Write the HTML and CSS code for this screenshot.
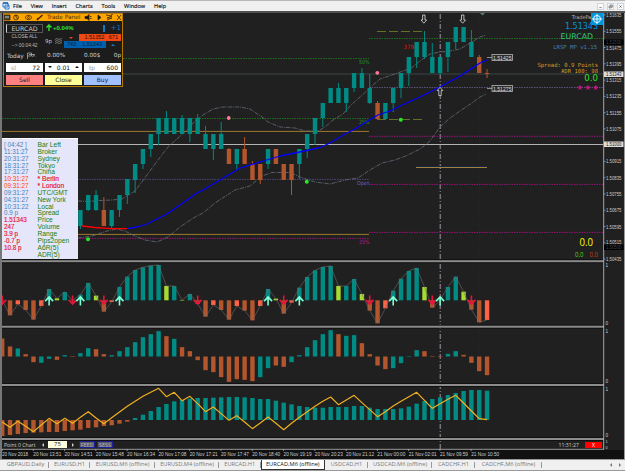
FILE: index.html
```html
<!DOCTYPE html>
<html lang="en">
  <head>
    <title>EURCAD,M6 (offline)</title>
    <meta charset="utf-8" />
    <link rel="stylesheet" href="styles.css">
  </head>
  <body>
    <header class="menu-bar">
      <svg class="app-icon" viewBox="0 0 8 8">
        <path d="M1 1h5v4H1z M3 3h4v4H3z" fill="#fff" stroke="#2478c8" />
        <path d="M1 1h5" stroke="#1464b4" stroke-width="1.5" />
      </svg>
      <nav class="menu">
        <span>File</span>
        <span>View</span>
        <span>Insert</span>
        <span>Charts</span>
        <span>Tools</span>
        <span>Window</span>
        <span>Help</span>
      </nav>
      <div class="window-buttons">
        <svg viewBox="0 0 7 7"><path d="M2 5h3" /></svg>
        <svg viewBox="0 0 7 7"><path d="M3 2.5v-1h3v3h-1M1.5 3h3v2.5h-3z" /></svg>
        <svg viewBox="0 0 7 7"><path d="M2 2l3 3M5 2l-3 3" /></svg>
      </div>
    </header>

    <main class="workspace">
      <svg id="chart" class="chart" viewBox="0 13 625 446"></svg>

      <section class="trade-panel">
        <div class="panel-title">
          <svg class="panel-icons" viewBox="0 0 40 7">
            <path d="M0 1h6v5H0z" fill="#444" />
            <path d="M1 3h4" stroke="#ddd" />
            <circle cx="12" cy="3.5" r="2.4" />
            <path d="M12 1v2.5l2 1" />
            <path d="M21 3.5q3.5-4.5 7 0q-3.5 4.5-7 0z" />
            <circle cx="24.5" cy="3.5" r="1" />
            <path d="M33 6l5.5-5M33 6l1-2" stroke-width="1.3" />
          </svg>
          <span>Trade Panel</span>
          <svg class="panel-icons-right" viewBox="0 0 38 7">
            <path d="M1 2.5h2l2-2v6l-2-2H1z" fill="#111" />
            <path d="M6 2.5h1.5M6 4.5h1.5" />
            <path d="M14 1l3 2.5-3 2.5z" fill="#111" />
            <path d="M22 1l6 1-5 2 5 0-5 2M27 1l2-1" />
            <path d="M33 1l4 5M37 1l-4 5" />
          </svg>
        </div>
        <div class="row row-symbol">
          <span class="symbol">EURCAD</span>
          <span class="change">
            <svg viewBox="0 0 6 7"><path d="M3 7V1M.5 3.5L3 1l2.5 2.5" /></svg>+0.04%
          </span>
          <span class="step"><i></i>+1</span>
        </div>
        <div class="row row-quotes">
          <div class="closing">
            <span>CLOSE ALL</span>
            <span>--&gt; 00:04:42</span>
          </div>
          <span class="spread">9p</span>
          <svg class="waves" viewBox="0 0 7 6">
            <path d="M0 1.5l2-1 2 1 3-1M0 3.5l2-1 2 1 3-1M0 5.5l2-1 2 1 3-1" />
          </svg>
          <div class="quotes">
            <div class="quote ask"><b class="down"></b><span>1.51352</span><span>671</span></div>
            <div class="quote bid"><span>743</span><span>1.51343</span><b class="up"></b></div>
          </div>
        </div>
        <div class="row row-today">
          <span class="today">Today
            <svg viewBox="0 0 9 7"><path d="M.5 7V1h4v3h-4M2 2.5h6M5 4.5q3-2 3 0" /></svg>
          </span>
          <span>0.00%</span>
          <span>0.00$</span>
          <span>0p</span>
        </div>
        <div class="row row-inputs">
          <div class="field"><em>sl</em><span>72</span></div>
          <div class="field"><b class="down"></b><span>0.01</span><b class="up"></b></div>
          <div class="field"><em>tp</em><span>600</span></div>
        </div>
        <div class="row row-buttons">
          <button class="sell">Sell</button>
          <button class="close">Close</button>
          <button class="buy">Buy</button>
        </div>
      </section>

      <section class="clocks">
        <ul class="values">
          <li>[ 04:42 ]</li>
          <li>11:31:27</li>
          <li>20:31:27</li>
          <li>18:31:27</li>
          <li>17:31:27</li>
          <li class="open">10:31:27</li>
          <li class="open">09:31:27</li>
          <li>09:31:27</li>
          <li>04:31:27</li>
          <li>10:31:22</li>
          <li>0.9 p</li>
          <li class="alert">1.51343</li>
          <li class="alert">247</li>
          <li class="alert">3.9 p</li>
          <li class="alert">-0.7 p</li>
          <li class="alert">10.8 p</li>
        </ul>
        <ul class="names">
          <li>Bar Left</li>
          <li>Broker</li>
          <li>Sydney</li>
          <li>Tokyo</li>
          <li>China</li>
          <li class="alert">* Berlin</li>
          <li class="alert">* London</li>
          <li>UTC/GMT</li>
          <li>New York</li>
          <li>Local</li>
          <li>Spread</li>
          <li>Price</li>
          <li>Volume</li>
          <li>Range</li>
          <li>Pips2open</li>
          <li>A6R(5)</li>
          <li>ADR(5)</li>
        </ul>
      </section>

      <section class="info">
        <div class="info-name">TradePanel</div>
        <div class="info-price">1.51343</div>
        <div class="info-symbol">EURCAD</div>
        <div class="info-version">LRSP MP v1.15</div>
        <div class="info-spread">Spread: 0.9 Points</div>
        <div class="info-adr">ADR 100: 98</div>
        <div class="info-pips">0.0</div>
        <svg class="info-stars" viewBox="0 0 22 7">
          <path id="star" d="M3 .4l.7 2h2.1L4.1 3.8l.7 2.3L3 4.8 1.2 6.1l.7-2.3L.2 2.4h2.1z" />
          <use href="#star" x="7.9" />
          <use href="#star" x="15.8" />
        </svg>
      </section>
      <svg class="target" viewBox="0 0 13 13">
        <circle cx="6.5" cy="6.5" r="3.8" />
        <path d="M6.5 1v11M1 6.5h11" />
      </svg>

      <div class="toolbar">
        <span class="toolbar-name">Point 0 Chart</span>
        <b class="left"></b>
        <span class="toolbar-value">75</span>
        <b class="right"></b>
        <span class="toggle">FEED</span>
        <span class="toggle">SESS</span>
        <span class="toolbar-time">11:31:27</span>
        <span class="toolbar-close">X</span>
      </div>
    </main>

    <footer class="tabs">
      <span style="width: 47px">GBPAUD,Daily</span>
      <span style="width: 41px">EURUSD,H1</span>
      <span style="width: 65px">EURUSD,M6 (offline)</span>
      <span style="width: 64px">EURUSD,M4 (offline)</span>
      <span style="width: 41.5px">EURCAD,H1</span>
      <span class="active" style="width: 64.5px">EURCAD,M6 (offline)</span>
      <span style="width: 43px">USDCAD,H1</span>
      <span style="width: 64px">USDCAD,M6 (offline)</span>
      <span style="width: 43px">CADCHF,H1</span>
      <span style="width: 67px">CADCHF,M6 (offline)</span>
      <div class="tabs-scroll"><b class="left"></b><b class="right"></b></div>
    </footer>
    <script src="chart.js"></script>
  </body>
</html>
```

FILE: styles.css
```css
* {
	box-sizing: border-box;
}

body {
	margin: 0;
	width: 625px;
	height: 471px;
	overflow: hidden;
	display: flex;
	flex-direction: column;
	background: #202020;
	font-family: "Open Sans", "Noto Sans", sans-serif;
	font-size: 6px;
	color: #ccc;
}

ul {
	list-style: none;
	margin: 0;
	padding: 0;
}

/* Menu bar */

.menu-bar {
	flex: none;
	display: flex;
	align-items: center;
	height: 13px;
	padding-left: 2px;
	background: #f0f0f0;
	border-top: 1px solid #b8b8b8;
	border-bottom: 2px solid #505252;
	color: #111;
}

.app-icon {
	width: 8px;
	height: 8px;
}

.menu {
	display: flex;
	gap: 8.8px;
	padding-left: 3px;
	font-size: 5.6px;
	line-height: 10px;
	-webkit-text-stroke: 0.15px #111;
}

.window-buttons {
	display: flex;
	gap: 3px;
	margin-left: auto;
	padding-right: 1px;
}

.window-buttons svg {
	width: 7px;
	height: 7px;
	background: #fbfbfb;
	border: 0.5px solid #ccd6df;
	fill: none;
	stroke: #555;
}

/* Chart */

.workspace {
	position: relative;
	flex: none;
	height: 446px;
}

.chart {
	display: block;
	width: 625px;
	height: 446px;
}

.axis {
	font: 5.6px "Liberation Sans", sans-serif;
}

.scale {
	font: 4.4px "Liberation Sans", sans-serif;
}

.level {
	font: 5.8px "DejaVu Sans", sans-serif;
}

.small {
	font: 7px "Open Sans", sans-serif;
}

.total {
	font: 10px "Open Sans", sans-serif;
}

/* Arrows */

.up,
.down,
.left,
.right {
	flex: none;
	width: 0;
	height: 0;
	border: 2px solid transparent;
}

.up {
	border-bottom-color: currentColor;
	border-top: 0;
}

.down {
	border-top-color: currentColor;
	border-bottom: 0;
}

.left {
	border-right-color: currentColor;
	border-left: 0;
}

.right {
	border-left-color: currentColor;
	border-right: 0;
}

/* Trade panel */

.trade-panel {
	position: absolute;
	left: 3px;
	top: 0;
	width: 120px;
	height: 74px;
	border: 1px solid #b87800;
	background: #1c1c1c;
	font-family: "DejaVu Sans", sans-serif;
}

.panel-title {
	display: flex;
	align-items: center;
	height: 7px;
	background: #ffa500;
	color: #4a3000;
	line-height: 7px;
	white-space: nowrap;
}

.panel-title span {
	width: 35px;
	margin-left: 3px;
	font-size: 5.8px;
}

.panel-icons,
.panel-icons-right {
	flex: none;
	width: 40px;
	height: 7px;
	fill: none;
	stroke: #332200;
	stroke-width: 0.8;
}

.panel-icons-right {
	width: 38px;
	margin-left: auto;
}

.row {
	display: flex;
	align-items: center;
	padding: 0 1px 0 2px;
}

.row-symbol {
	height: 13px;
	padding-top: 1px;
}

.symbol {
	width: 37px;
	height: 9px;
	border: 1px solid #555;
	border-left-color: #ccc;
	font-size: 6.3px;
	line-height: 7px;
	text-align: center;
}

.change {
	padding-left: 3px;
	color: #2ee62e;
	font: bold 6px/9px "Liberation Sans", sans-serif;
}

.change svg {
	width: 6px;
	height: 7px;
	margin-right: 1px;
	fill: none;
	stroke: currentColor;
	stroke-width: 1.4;
	vertical-align: -1px;
}

.step {
	display: flex;
	align-items: center;
	gap: 6px;
	margin-left: auto;
	color: #1478c8;
	font-size: 7px;
}

.step i {
	width: 2px;
	height: 7px;
	background: #1478c8;
}

.row-quotes {
	height: 14px;
}

.closing {
	display: flex;
	flex-direction: column;
	width: 37px;
	align-items: center;
	font: 4.8px/9px "Liberation Sans", sans-serif;
	color: #bbb;
}

.spread {
	width: 12px;
	padding-left: 2px;
	font-size: 5.4px;
	white-space: nowrap;
}

.waves {
	width: 7px;
	height: 6px;
	fill: none;
	stroke: #aaa;
	stroke-width: 0.6;
}

.quotes {
	display: flex;
	flex-direction: column;
	width: 54px;
	margin-left: auto;
	font: 5.5px/7px "Liberation Sans", sans-serif;
	color: #331000;
}

.quote {
	display: flex;
	align-items: center;
	justify-content: space-between;
	height: 7px;
	padding: 0 3px;
}

.ask {
	width: 42px;
	margin-left: 12px;
	background: #f04814;
}

.ask .down {
	width: 0;
	margin-left: -13px;
	margin-right: 7px;
	color: #f04814;
}

.bid {
	width: 42px;
	margin-left: -3px;
	background: #0060b0;
	color: #001c38;
}

.bid .up {
	margin-left: 3px;
	margin-right: -12px;
	color: #1478c8;
}

.row-today {
	height: 14px;
	font-size: 5.7px;
}

.row-today span:nth-child(2) {
	width: 37px;
	margin-left: 4px;
}

.row-today span:last-child {
	margin-left: auto;
}

.today {
	width: 37px;
	padding-left: 1px;
	font-size: 5.8px;
	white-space: nowrap;
}

.today svg {
	width: 9px;
	height: 7px;
	margin-left: 1px;
	fill: none;
	stroke: #bbb;
	stroke-width: 0.7;
	vertical-align: -1px;
}

.row-inputs {
	height: 10px;
	gap: 2px;
}

.field {
	display: flex;
	flex: 1;
	align-items: center;
	justify-content: space-between;
	height: 9px;
	padding: 0 3px;
	background: #fff;
	color: #111;
	line-height: 9px;
}

.field em {
	padding-left: 2px;
	color: #999;
	font-style: normal;
}

.row-buttons {
	gap: 2px;
	margin-top: 3px;
}

.row-buttons button {
	flex: 1;
	height: 10px;
	padding: 0;
	border: 0;
	color: #222;
	font: 6px/10px "DejaVu Sans", sans-serif;
}

.row-buttons .sell {
	background: #ff8080;
}

.row-buttons .close {
	background: #ffff98;
}

.row-buttons .buy {
	background: #a0c0ff;
}

/* Clocks */

.clocks {
	position: absolute;
	left: 2px;
	top: 125px;
	display: grid;
	grid-template-columns: 33.5px 1fr;
	width: 76px;
	height: 121px;
	padding: 3px 0 0 2px;
	background: #e6e6fa;
	border-top: 1px solid #fff;
	font: 6.7px/6.85px "Liberation Sans", sans-serif;
	white-space: nowrap;
}

.values {
	color: #4682b4;
	font-size: 6.3px;
}

.values .open {
	color: #ff4500;
}

.names {
	color: #148014;
}

.clocks .alert {
	color: #e61432;
	-webkit-text-stroke: 0.15px #e61432;
}

/* Info */

.info {
	position: absolute;
	top: 0;
	right: 26px;
	width: 90px;
	height: 80px;
	display: flex;
	flex-direction: column;
	align-items: flex-end;
	font-family: "DejaVu Sans", sans-serif;
	white-space: nowrap;
}

.info-name {
	font: 5px/9px "DejaVu Sans", sans-serif;
	color: #bbb;
}

.info-price {
	margin-right: 1px;
	color: #0094dc;
	font-size: 8px;
	line-height: 9px;
}

.info-symbol {
	margin-right: 6px;
	color: #32c878;
	font-size: 7.8px;
	line-height: 12px;
}

.info-version {
	margin-right: 2px;
	color: #4682b4;
	font: 5.6px/8px "DejaVu Sans Mono", monospace;
}

.info-spread,
.info-adr {
	margin-right: 1px;
	color: #d69a24;
	font: 5.6px/6px "DejaVu Sans Mono", monospace;
}

.info-spread {
	margin-top: 11px;
}

.info-pips {
	margin-right: 1px;
	color: #28e628;
	font-size: 8.6px;
	line-height: 9px;
}

.info-stars {
	width: 22px;
	height: 7px;
	margin-top: 1px;
	fill: #d01488;
}

.target {
	position: absolute;
	left: 591px;
	top: 0;
	width: 12px;
	height: 12px;
	background: #0096dc;
	fill: none;
	stroke: #fff;
	stroke-width: 1;
}

/* Toolbar */

.toolbar {
	position: absolute;
	left: 3px;
	top: 427px;
	display: flex;
	align-items: center;
	width: 600px;
	height: 9px;
	padding: 0 1px;
	white-space: nowrap;
}

.toolbar-name {
	width: 38px;
	font-size: 5.2px;
}

.toolbar-value {
	width: 19px;
	margin: 0 5px 0 4px;
	background: #ffffe0;
	color: #222;
	line-height: 7px;
	text-align: center;
}

.toggle {
	width: 16px;
	height: 7px;
	margin-left: 2px;
	border: 0.5px solid #1e1e96;
	background: #5a5a64;
	color: #aab4c8;
	font-size: 5.4px;
	line-height: 6px;
	text-align: center;
}

.toolbar .right {
	margin-right: 3px;
}

.toolbar-time {
	margin-left: auto;
	margin-right: 6px;
	font-size: 5.2px;
}

.toolbar-close {
	width: 17px;
	height: 6px;
	background: #f00;
	color: #fff;
	font-size: 5px;
	line-height: 6px;
	text-align: center;
}

/* Tabs */

.tabs {
	display: flex;
	flex: none;
	height: 12px;
	padding-left: 2px;
	background: #f0f0f0;
	border-top: 1px solid #999;
	border-bottom: 1px solid #999;
	color: #777;
	font-size: 5.7px;
	line-height: 9px;
	white-space: nowrap;
}

.tabs span {
	position: relative;
	text-align: center;
}

.tabs span:after {
	content: "";
	position: absolute;
	right: 0;
	top: 2px;
	height: 6px;
	border-right: 1px solid #999;
}

.tabs .active {
	background: #fff;
	border: 1px solid #333;
	border-top: 0;
	color: #111;
}

.tabs .active:after {
	display: none;
}

.tabs-scroll {
	display: flex;
	gap: 7px;
	margin-left: auto;
	padding: 3px 4px 0 0;
}
```

FILE: chart.js
```js
'use strict'

const svg = document.getElementById('chart')
const TEAL = '#008b84'
const BROWN = '#b4562d'
const colors = { t: TEAL, b: BROWN, y: '#a6dc32', r: '#ff6347' }

function barX(i) {
  return 2.2 + i * 7.82
}

function add(tag, attrs, text) {
  const el = document.createElementNS('http://www.w3.org/2000/svg', tag)
  Object.keys(attrs).forEach((key) => el.setAttribute(key, attrs[key]))
  if (text) {
    el.textContent = text
  }
  svg.appendChild(el)
}

function rect(x, y, width, height, fill) {
  add('rect', { x, y, width, height, fill })
}

function line(x1, y1, x2, y2, stroke, width, dash) {
  add('line', {
    x1, y1, x2, y2, stroke,
    'stroke-width': width || 1,
    'stroke-dasharray': dash || 'none'
  })
}

function path(points, stroke, width, dash) {
  add('polyline', {
    points, stroke, fill: 'none',
    'stroke-width': width,
    'stroke-dasharray': dash || 'none',
    'stroke-linejoin': 'round'
  })
}

function label(x, y, text, width, fill, cls) {
  add('text', { x, y, fill, textLength: width, lengthAdjust: 'spacingAndGlyphs', class: cls || 'axis' }, text)
}

// ------------------------ FRAME ------------------------
rect(0, 13, 625, 446, '#202020')
rect(2, 450, 622, 9, '#111')

// session and period markers
line(479.5, 14, 479.5, 449, '#24204e', 1, '1 2')
line(440.3, 14, 440.3, 449, '#786e7c', 1.5, '5 2 1 2')

// ------------------------ LEVELS ------------------------
line(2, 74, 603, 74, '#333838', 1.4)
line(123, 58.5, 369, 58.5, '#1e6e1e', 1, '1.5 1')
line(2, 118.5, 369, 118.5, '#1e6e1e', 1, '1.5 1')
line(369, 38.5, 603, 38.5, '#1e6e1e', 1, '1.5 1')
line(369, 87.5, 603, 87.5, '#5a5078', 1, '1.5 1')
line(2, 179.4, 369, 179.4, '#504678', 1, '1.5 1')
line(2, 131.4, 369, 131.4, '#a0782d', 1)
line(2, 234.4, 369, 234.4, '#a0782d', 1)
line(2, 238.4, 369, 238.4, '#961478', 1, '1.5 1')
;[136.3, 184.4, 232.4].forEach((y) => line(369, y, 603, y, '#961478', 1, '1.5 1'))
line(377, 31.5, 422, 31.5, '#6e7828', 0.9, '9 3')
line(377, 119.5, 422, 119.5, '#6e7828', 0.9, '9 3')
line(416, 166.7, 487, 166.7, '#142850', 1)
line(416, 167.5, 487, 167.5, '#a0823c', 1)
line(2, 144.5, 603, 144.5, '#b4b4b4', 1.2)

label(359, 64, '50%', 10.5, '#239123', 'level')
label(359, 124, '25%', 10.5, '#239123', 'level')
label(357, 184.5, 'Open', 12.5, '#6a5cc0', 'level')
label(359, 244, '25%', 10.5, '#b8148a', 'level')
label(403.5, 48.5, '379', 10.5, '#dc1414', 'level')

// ------------------------ BANDS ------------------------
path('78,201 88,201.5 100,200.5 112,200 122,199 135,191 147,175 158,160 168,147 178,138 187,130 195,121 203,115 213,109 223,107 240,107 250,109 262,117 268,122 280,127 295,128 305,131 318,131 325,127 333,120 343,114 350,106 360,97 372,86 380,79 392,75 403,71 410,69 420,61 430,54 440,52 450,51 460,49 470,43 480,37 486,35', '#66707c', 0.8, '4 1 1 1')
path('78,238 92,236 107,231 117,229 125,231 135,236 145,240 157,242 168,237 180,227 195,217 203,213 215,203 235,190 250,186 262,176 272,172.5 290,172.5 300,177 315,182 330,184 345,180 358,178 370,170 382,163 395,160 408,155 420,149 430,141 440,127 450,118 460,111 472,103 480,97 486,94', '#66707c', 0.8, '4 1 1 1')

// ------------------------ CANDLES ------------------------
// [color, body top, body bottom, high, low], first candle is bar 10
const candles = [
  ['t', 210, 226, 210, 229], ['t', 195, 210, 195, 211], ['t', 195, 210, 190, 211],
  ['b', 210, 226, 197, 226], ['t', 210, 226, 210, 229], ['t', 195, 210, 195, 217],
  ['t', 179, 195, 179, 204], ['t', 164, 180, 164, 193], ['t', 149, 164, 149, 169],
  ['t', 134, 149, 134, 157], ['t', 118, 134, 118, 145], ['t', 118, 134, 111, 134],
  ['t', 118, 134, 118, 134], ['t', 118, 134, 115, 134], ['t', 118, 134, 118, 142],
  ['t', 118, 134, 114, 134], ['t', 134, 149, 126, 149], ['t', 134, 149, 134, 160],
  ['t', 134, 149, 122, 149], ['b', 149, 164, 148, 164], ['t', 149, 164, 149, 170],
  ['b', 149, 164, 137, 164], ['b', 164, 180, 161, 180], ['b', 164, 180, 164, 184],
  ['t', 149, 164, 149, 169], ['b', 149, 164, 149, 164], ['b', 164, 180, 164, 180],
  ['b', 164, 180, 164, 195], ['t', 149, 164, 149, 179], ['t', 134, 149, 134, 158],
  ['t', 118, 134, 118, 145], ['t', 103, 118, 103, 127], ['t', 88, 103, 88, 103],
  ['t', 88, 103, 83, 103], ['t', 88, 103, 88, 112], ['t', 73, 88, 73, 92],
  ['t', 73, 88, 68, 88], ['t', 88, 103, 74, 104], ['b', 103, 119, 101, 120],
  ['t', 103, 119, 103, 119], ['t', 88, 103, 88, 112], ['t', 73, 88, 73, 98],
  ['t', 57, 73, 57, 86], ['t', 42, 57, 42, 68], ['t', 42, 57, 31, 59],
  ['t', 57, 73, 43, 73], ['t', 57, 73, 57, 75], ['t', 42, 57, 42, 72],
  ['t', 27, 42, 27, 49], ['t', 27, 42, 27, 42], ['t', 42, 57, 30, 57],
  ['b', 57, 73, 55, 73], ['b', 73, 74, 69, 78]
]
candles.forEach(([color, top, bottom, high, low], n) => {
  const x = barX(n + 10)
  rect(x - 0.5, high, 1, low - high, colors[color])
  rect(x - 2.2, top, 4.4, bottom - top, colors[color])
})

path('82,226 95,227.5 111,228.7 127,228.7', '#ff0000', 1.3)
path('127,228.7 137,227 147,224 157,219 167,214 177,207 187,200 197,193 203,190 220,180 240,168 260,162 280,156 300,152 320,147.5 330,143 345,134 355,129 370,119.5 378,115 390,111 400,106 420,97 440,87 460,76 480,63 487,60', '#0000ff', 1.3)

// swing points
;[[228.7, 118], [377.3, 72.8]].forEach(([cx, cy]) => add('circle', { cx, cy, r: 1.9, fill: '#ff7896' }))
;[[88, 239.3], [306.8, 181.7], [400.8, 119.7]].forEach(([cx, cy]) => add('circle', { cx, cy, r: 2, fill: '#28e628' }))

function hollowArrow(x, y, dir) {
  const d = `M${x - 1.2} ${y - 4 * dir}h2.4v${5 * dir}h1.6l-2.8 ${3.2 * dir}l-2.8 ${-3.2 * dir}h1.6z`
  add('path', { d, fill: '#202020', stroke: '#ddd', 'stroke-width': 0.8 })
}
hollowArrow(423.8, 19, 1)
hollowArrow(462.7, 19, 1)
hollowArrow(440, 91.5, -1)
add('path', { d: 'M480 13h5l-2.5 2.5z', fill: '#5a7878' })

// price tags
;[[57.5, '1.51425'], [88.5, '1.51275']].forEach(([y, text]) => {
  line(487, y, 492, y, '#aaa', 0.8)
  add('rect', { x: 492, y: y - 3, width: 20.5, height: 6, fill: '#2c2c2c', stroke: '#b4b4b4', 'stroke-width': 0.8 })
  label(493, y + 2, text, 18.5, '#ddd')
})

label(579.5, 246.3, '0.0', 13.5, '#ffff00', 'total')
label(575, 256.8, '0.0', 8.5, '#5ad214', 'small')
label(589.5, 256.8, '0.0', 8.5, '#c83c14', 'small')

// ------------------------ INDICATORS ------------------------
// a bar is its color letter and its height in thirds of a pixel, negative is below zero
function histogram(base, bars) {
  return bars.split(' ').map((bar, i) => {
    const value = Number(bar.slice(1)) / 3
    const x = barX(i)
    const left = Math.max(x - 2.2, 2)
    rect(left, value > 0 ? base - value : base, x + 2.2 - left, Math.max(Math.abs(value), 0.5), colors[bar[0]])
    return x + ',' + (base - value)
  }).join(' ')
}

const momentum = histogram(300.3, 't0 b-45 r-12 b-29 b-58 r-17 t34 y6 t25 b-1 t17 t52 y14 b-34 r-5 t40 t71 t91 t99 t104 t106 y43 t43 y1 t19 b-11 b-49 r-14 b-29 b-58 r-17 b-31 b-60 r-17 t34 y5 b-40 r-7 t38 t70 t90 t100 t103 y43 t43 t64 y19 b-31 b-69 r-24 t29 t65 t88 t97 y40 b-22 t0 t40 t71 y26 b-28 b-66 r-59')
path(momentum, '#6c6c6c', 0.6)

histogram(356.5, 'b54 b30 t24 b7 b-17 t-19 t-7 b-10 t4 b1 t10 t25 b22 b7 t4 t16 t28 t43 t58 t67 t76 b61 t53 b28 b16 b-11 b-41 b-47 b-62 b-76 b-68 b-70 b-74 t-62 t-35 b-27 b-31 t-17 t4 t28 t49 t67 t79 b67 t62 t64 b40 b7 b-27 b-38 t-35 t-20 t1 t19 b16 b1 b1 t8 t16 b5 b-19 b-44 b-56')

histogram(420, 'b-48 b-45 b-42 b-39 b-38 b-37 b-36 b-36 b-33 b-31 b-29 b-24 b-22 b-18 b-16 b-11 b-5 t6 t16 t27 t39 t48 t56 t60 t64 t66 t66 t67 t68 t69 t69 t68 t66 t63 t63 t58 t52 t47 t42 t39 t37 t37 t39 t39 t39 t42 t42 t37 t33 t33 t33 t35 t40 t49 t57 t63 t68 t75 t81 t87 t90 t90 t88')

const signal = [
  501, 517, 499, 514, 530, 510, 490, 506, 490, 505, 487, 470, 489, 506, 488, 471,
  454, 439, 424, 412, 400, 425, 412, 437, 424, 446, 470, 456, 476, 496, 482, 501,
  521, 504, 486, 505, 524, 505, 487, 470, 454, 439, 426, 449, 435, 421, 443, 464,
  485, 470, 453, 439, 425, 412, 436, 460, 446, 433, 421, 444, 468, 491, 494
]
path(signal.map((y, i) => barX(i) + ',' + (255 + y / 3)).join(' '), '#f0b020', 1.2)

function signalArrow(i, dir, stroke) {
  const x = barX(i)
  const tip = 300.5 + dir * 3.6
  const d = `M${x} ${tip - dir * 8.5}V${tip}M${x - 4} ${tip - dir * 4.2}L${x} ${tip}L${x + 4} ${tip - dir * 4.2}`
  add('path', { d, stroke, fill: 'none', 'stroke-width': 1.6 })
}
;[0, 9, 13, 25, 36, 47, 55, 60].forEach((i) => signalArrow(i, 1, '#e6143c'))
;[6, 10, 15, 34, 38, 50, 56].forEach((i) => signalArrow(i, -1, '#7fffd4'))

// ------------------------ SEPARATORS AND AXES ------------------------
;[261.2, 326.7, 385, 439].forEach((y) => {
  rect(2, y - 2, 602, 4, '#111')
  rect(2, y - 1, 602, 2, '#8c8c8c')
})
rect(0, 13, 2, 446, '#777')
rect(604, 13, 20, 437, '#202020')
rect(624, 13, 1, 446, '#999')
line(603.7, 13, 603.7, 449.5, '#b4b4b4', 0.9)
line(2, 449.3, 604, 449.3, '#b4b4b4', 0.8)

const prices = ['1.51635', '1.51555', '1.51475', '1.51395', '1.51315', '1.51235', '1.51155', '1.51075', '', '1.50915', '1.50835', '1.50755', '1.50675', '1.50595', '1.50515', '1.50435']
prices.forEach((price, i) => {
  if (price) {
    const y = 15 + i * 16.27
    line(604, y, 605.5, y, '#b4b4b4', 0.7)
    label(606, y + (i === 14 ? 1 : 2), price, 15.5, '#ccc')
  }
})
;[[42, '1.51500', '#000', '#444'], [247, '1.50500', '#000', '#444'], [74, '1.51343', '#ddd', '#222'], [144, '1.51000', '#ddd', '#222']].forEach(([y, text, back, fill]) => {
  rect(604, y - 2.5, 19.5, 5.5, back)
  label(606, y + 2.2, text, 15.5, fill)
})

;[[267, '1'], [325, '0'], [332.5, '1'], [383, '0'], [391, '1'], [436.5, '0']].forEach(([y, text]) => label(605.5, y, text, 2.6, '#ccc'))
label(605.5, 443.2, '1', 2.2, '#ccc', 'scale')
label(605.5, 448.8, '0', 2.2, '#ccc', 'scale')

const times = ['20 Nov 2018', '20 Nov 13:51', '20 Nov 14:51', '20 Nov 15:48', '20 Nov 16:34', '20 Nov 17:08', '20 Nov 17:21', '20 Nov 17:47', '20 Nov 18:40', '20 Nov 19:19', '20 Nov 20:23', '20 Nov 21:12', '21 Nov 00:00', '21 Nov 02:01', '21 Nov 09:59', '21 Nov 10:50']
times.forEach((time, i) => {
  const x = 2 + i * 31.28
  line(x, 449, x, 451, '#b4b4b4', 0.7)
  label(x, 456, time, i ? 28 : 26, '#ccc')
})
```
